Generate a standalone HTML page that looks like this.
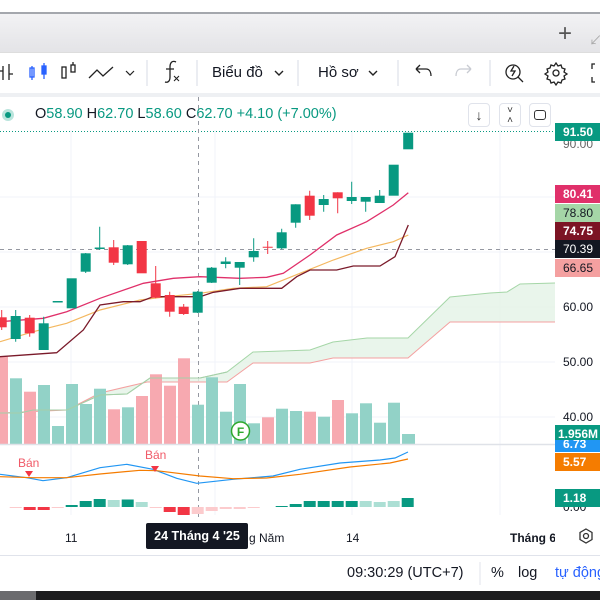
<!DOCTYPE html>
<html><head><meta charset="utf-8"><style>
*{margin:0;padding:0;box-sizing:border-box}
body{width:600px;height:600px;overflow:hidden;background:#fff;font-family:"Liberation Sans","Noto Sans CJK SC",sans-serif;position:relative;color:#131722}
.a{position:absolute;white-space:nowrap}
.pl{position:absolute;left:555px;width:45px;height:18px;font-size:12px;font-weight:bold;line-height:18px;padding-left:8px;color:#fff}
.ax{position:absolute;left:563px;font-size:12px;color:#131722}
.btn{position:absolute;top:103px;width:22px;height:24px;border:1px solid #e0e3eb;border-radius:4px;background:#fff;font-size:14px;text-align:center;line-height:22px;color:#333}
</style></head><body>
<!-- top chrome -->
<div class="a" style="left:0;top:0;width:600px;height:12px;background:#fff"></div>
<div class="a" style="left:0;top:12px;width:600px;height:2px;background:#a4a7ad"></div>
<div class="a" style="left:0;top:14px;width:600px;height:38px;background:linear-gradient(#f2f2f4,#e4e4e7)"></div>
<div class="a" style="left:558px;top:22px;font-size:24px;color:#555;line-height:24px">+</div>
<div class="a" style="left:589px;top:30px;font-size:13px;color:#aaa">↙</div>
<div class="a" style="left:0;top:52px;width:600px;height:42px;background:#fff;border-top:1px solid #ddd"></div>
<div class="a" style="left:0;top:93px;width:600px;height:4px;background:#eef0f3"></div>
<!-- toolbar icons -->
<svg class="a" style="left:0;top:52px" width="600" height="42" viewBox="0 0 600 42">
<g fill="none" stroke="#222" stroke-width="1.3">
<path d="M3 14v14M0 19h3M9 12v16M9 22h4"/>
<path d="M32 14v14M44 11v16" stroke="#2962ff"/><rect x="30" y="16" width="4" height="9" stroke="#2962ff"/><rect x="42" y="14" width="4" height="8" stroke="#2962ff" fill="#2962ff"/>
<rect x="62" y="15" width="4" height="11"/><rect x="71" y="13" width="4" height="7"/><path d="M73 10v3"/>
<path d="M89 26l8-8 6 6 10-9"/>
<path d="M126 19l4 4 4-4" stroke-width="1.2"/>
<path d="M147 8v26M197 8v26M298 8v26M398 8v26M490 8v26" stroke="#e0e3eb"/>
<path d="M176 10c-4-2-6 1-6 5v10c0 4-2 6-5 5M166 17h8"/>
<path d="M174 24l5 5M179 24l-5 5" stroke-width="1.1"/>
<path d="M275 19l4 4 4-4M369 19l4 4 4-4" stroke-width="1.4"/>
<path d="M416 17h10c4 0 5 4 5 7M416 17l4-4M416 17l4 4"/>
<path d="M471 17h-10c-4 0-5 4-5 7M471 17l-4-4M471 17l-4 4" stroke="#c8cbd2"/>
<circle cx="513" cy="20" r="7"/><path d="M518 25l5 5M514 14l-3 5h4l-3 5"/>
<circle cx="556" cy="21" r="3"/><path d="M556 11l2 3 3-1 1 3 3 1-1 3 3 2-3 2 1 3-3 1-1 3-3-1-2 3-2-3-3 1-1-3-3-1 1-3-3-2 3-2-1-3 3-1 1-3 3 1z"/>
<path d="M595 12h-3v5M592 25v5h3"/>
</g></svg>
<div class="a" style="left:212px;top:64px;font-size:15px">Biểu đồ</div>
<div class="a" style="left:318px;top:64px;font-size:15px">Hồ sơ</div>
<!-- legend -->
<div class="a" style="left:2px;top:109px;width:12px;height:12px;border-radius:50%;background:#b9e4dc"></div>
<div class="a" style="left:5px;top:112px;width:6px;height:6px;border-radius:50%;background:#089981"></div>
<div class="a" style="left:35px;top:106px;font-size:14.5px;color:#089981"><span style="color:#131722">O</span>58.90 <span style="color:#131722">H</span>62.70 <span style="color:#131722">L</span>58.60 <span style="color:#131722">C</span>62.70 +4.10 (+7.00%)</div>
<div class="btn" style="left:468px">↓</div>
<div class="btn" style="left:499px;font-size:10px;line-height:10px;padding-top:2px">˅<br>˄</div>
<div class="btn" style="left:529px"><div style="margin:6px auto;width:12px;height:10px;border:1.5px solid #333;border-radius:3px"></div></div>
<!-- chart -->
<svg class="a" style="left:0;top:0" width="600" height="600" viewBox="0 0 600 600">
<g stroke="#f0f3fa" stroke-width="1"><path d="M0 307H555M0 362H555M0 417H555M0 252H555M0 197H555M71 130V515M215 130V515M352 130V515M500 130V515"/></g>
<path d="M0 131.5H555" stroke="#089981" stroke-dasharray="1 2" stroke-width="1"/>
<path d="M0 249.5H555M198.5 97V520" stroke="#9598a1" stroke-dasharray="4 4" stroke-width="1"/>
<!-- cloud -->
<path d="M0 413 20 413 33 410 67 410 100 395 127 394 150 378 200 378 227 372 253 352 310 350 333 342 367 338 408 338 450 297 490 293 507 292 520 284 555 283 555 322 450 322 408 358 333 358 310 363 253 363 227 382 147 382 100 393 67 410 0 413Z" fill="#e4f2e6" opacity=".8"/>
<path d="M0 413 20 413 33 410 67 410 100 395 127 394 150 378 200 378 227 372 253 352 310 350 333 342 367 338 408 338 450 297 490 293 507 292 520 284 555 283" fill="none" stroke="#a5d6a7" stroke-width="1"/>
<path d="M0 413 67 410 100 393 147 382 227 382 253 363 310 363 333 358 408 358 450 322 555 322" fill="none" stroke="#f4a0a0" stroke-width="1"/>
<!-- volume -->
<g fill="#92d2c7">
<rect x="10" y="378.3" width="12" height="66.7"/><rect x="38" y="385" width="12" height="60"/><rect x="52" y="426" width="12" height="19"/><rect x="66" y="384" width="12" height="61"/><rect x="80" y="404" width="12" height="41"/><rect x="94" y="388.7" width="12" height="56.3"/><rect x="122" y="407.3" width="12" height="37.7"/><rect x="192" y="404.7" width="12" height="40.3"/><rect x="206" y="377.3" width="12" height="67.7"/><rect x="220" y="411.7" width="12" height="33.3"/><rect x="234" y="384" width="12" height="61"/><rect x="248" y="423.3" width="12" height="21.7"/><rect x="276" y="408.7" width="12" height="36.3"/><rect x="290" y="411" width="12" height="34"/><rect x="318" y="416.7" width="12" height="28.3"/><rect x="346" y="413.3" width="12" height="31.7"/><rect x="360" y="403.3" width="12" height="41.7"/><rect x="374" y="422.7" width="12" height="22.3"/><rect x="388" y="402.7" width="12" height="42.3"/><rect x="402" y="434" width="13" height="11"/>
</g>
<g fill="#f7a9b0">
<rect x="-4" y="356.7" width="12" height="88.3"/><rect x="24" y="391.7" width="12" height="53.3"/><rect x="108" y="409.3" width="12" height="35.7"/><rect x="136" y="396" width="12" height="49"/><rect x="150" y="374.3" width="12" height="70.7"/><rect x="164" y="385.7" width="12" height="59.3"/><rect x="178" y="358.3" width="12" height="86.7"/><rect x="262" y="417.3" width="12" height="27.7"/><rect x="304" y="411.7" width="12" height="33.3"/><rect x="332" y="400" width="12" height="45"/>
</g>
<path d="M0 413 20 413 33 410 67 410 100 395 127 394 150 378 200 378 227 372" fill="none" stroke="#a5cfa8" stroke-width="1"/>
<!-- MAs -->
<polyline points="0,321.7 43.3,318.3 66.7,311.7 100,298.3 143.3,283.3 173.3,278.3 200,276.7 240,278.3 266.7,277.3 283.3,273.3 310,255 336.7,235 366.7,221.7 393.3,205 408.3,192.7" fill="none" stroke="#e0306a" stroke-width="1.3"/>
<polyline points="0,341.7 33.3,331.7 66.7,323.3 100,310 140,300 166.7,296.7 200,293.3 233.3,288.3 266.7,286.7 300,273.3 333.3,260 366.7,248.3 393.3,241.7 408.3,235" fill="none" stroke="#f4b860" stroke-width="1.2"/>
<polyline points="0,356.7 56.7,352.7 83.3,330 100,305 123.3,301.7 140,301.7 153.3,296.7 200,296.7 213.3,292.3 240,288.3 281.7,288.3 296.7,276.7 310,270 336.7,270 353.3,266 380,266 395,256.7 408.3,225" fill="none" stroke="#7a1a2a" stroke-width="1.3"/>
<!-- candles -->
<g stroke="#089981" fill="#089981" stroke-width="1">
<path d="M15.7 310V341.7M43.7 316.7V350M57.7 301.7V302M85.7 253V273M99.7 226.7V250M127.7 245V265M197.7 291V313M211.7 267V283M225.7 257.3V268.3M239.7 262V285M253.7 238.3V261.7M281.7 228.7V249.3M295.7 204.3V227.7M323.7 195V211.7M351.7 181.7V204M365.7 197V211.7M379.7 190V203"/>
<rect x="10.7" y="316" width="10" height="23" stroke="none"/><rect x="38.7" y="323.3" width="10" height="26.7" stroke="none"/><rect x="52.7" y="301" width="10" height="1.5" stroke="none"/><rect x="66.7" y="278.3" width="10" height="30" stroke="none"/><rect x="80.7" y="253.3" width="10" height="18.4" stroke="none"/><rect x="94.7" y="247.5" width="10" height="1.5" stroke="none"/><rect x="122.7" y="245.3" width="10" height="19" stroke="none"/><rect x="192.7" y="291.7" width="10" height="21" stroke="none"/><rect x="206.7" y="267.7" width="10" height="15" stroke="none"/><rect x="220.7" y="261.5" width="10" height="2.5" stroke="none"/><rect x="234.7" y="262" width="10" height="5.7" stroke="none"/><rect x="248.7" y="251" width="10" height="6.3" stroke="none"/><rect x="276.7" y="232.3" width="10" height="16" stroke="none"/><rect x="290.7" y="204.3" width="10" height="18.4" stroke="none"/><rect x="318.7" y="199" width="10" height="6" stroke="none"/><rect x="346.7" y="197" width="10" height="4" stroke="none"/><rect x="360.7" y="197" width="10" height="4.7" stroke="none"/><rect x="374.7" y="195.7" width="10" height="7.3" stroke="none"/><rect x="388.7" y="164.7" width="10" height="31" stroke="none"/><rect x="403.2" y="132.7" width="10" height="16.6" stroke="none"/>
</g>
<g stroke="#f23645" fill="#f23645" stroke-width="1">
<path d="M1.7 310V330M29.7 315V336.7M113.7 240V265M155.7 266V298.3M169.7 291.7V316.7M183.7 304V315M267.7 241V254M262.7 247.3H272.7M309.7 190.7V220M337.7 192.3V213.3"/>
<rect x="-3.3" y="317.3" width="10" height="10" stroke="none"/><rect x="24.7" y="317.7" width="10" height="15.6" stroke="none"/><rect x="108.7" y="247.3" width="10" height="15.4" stroke="none"/><rect x="136.7" y="241" width="10" height="32.3" stroke="none"/><rect x="150.7" y="283.3" width="10" height="14.4" stroke="none"/><rect x="164.7" y="295" width="10" height="16.7" stroke="none"/><rect x="178.7" y="306.7" width="10" height="7.3" stroke="none"/><rect x="304.7" y="195.7" width="10" height="20" stroke="none"/><rect x="332.7" y="192.3" width="10" height="6" stroke="none"/>
</g>
<!-- F marker -->
<circle cx="240.5" cy="431" r="9" fill="#fff" stroke="#2ea82e" stroke-width="1.5"/>
<text x="240.5" y="436" font-family="Liberation Sans" font-size="12" font-weight="bold" fill="#2ea82e" text-anchor="middle">F</text>
<!-- pane separator -->
<path d="M0 444.5H600" stroke="#dfe2e8" stroke-width="1.5"/>
<!-- MACD -->
<polyline points="0,474.3 26.7,477.7 43,480.7 66.7,477.7 100,467.7 126.7,464.3 153,469.3 176.7,478.3 196.7,483.3 233,479.3 273,476 300,469.3 340,463 380,460 395,458 408,452" fill="none" stroke="#2196f3" stroke-width="1.2"/>
<polyline points="0,476.7 33,477.7 66.7,477.7 100,474 140,470.3 156.7,470.7 200,476 233,478.7 266.7,478 300,474.3 350,467 390,463 408,459" fill="none" stroke="#f57c00" stroke-width="1.2"/>
<path d="M25 471h8l-4 6z M151 466h8l-4 6z" fill="#f23645"/>
<text x="18" y="467" font-family="Liberation Sans" font-size="12" fill="#f05a68">Bán</text>
<text x="145" y="459" font-family="Liberation Sans" font-size="12" fill="#f05a68">Bán</text>
<g>
<rect x="9.7" y="507" width="12" height="1" fill="#fccbcd"/>
<rect x="23.7" y="507" width="12" height="3" fill="#f23645"/><rect x="37.7" y="507" width="12" height="3" fill="#f23645"/><rect x="51.7" y="507" width="12" height="1" fill="#fccbcd"/>
<rect x="65.7" y="505" width="12" height="2" fill="#089981"/><rect x="79.7" y="501" width="12" height="6" fill="#089981"/><rect x="93.7" y="499" width="12" height="8" fill="#089981"/><rect x="107.7" y="500" width="12" height="7" fill="#acdfd4"/><rect x="121.7" y="499.5" width="12" height="7.5" fill="#089981"/><rect x="135.7" y="502" width="12" height="5" fill="#acdfd4"/>
<rect x="149.7" y="507" width="12" height="1" fill="#fccbcd"/><rect x="163.7" y="507" width="12" height="5" fill="#f23645"/><rect x="177.7" y="507" width="12" height="8" fill="#f23645"/><rect x="191.7" y="507" width="12" height="7" fill="#fccbcd"/><rect x="205.7" y="507" width="12" height="4" fill="#fccbcd"/><rect x="219.7" y="507" width="12" height="2" fill="#fccbcd"/><rect x="233.7" y="507" width="12" height="2" fill="#fccbcd"/><rect x="247.7" y="507" width="12" height="1" fill="#fccbcd"/>
<rect x="275.7" y="506" width="12" height="1" fill="#089981"/><rect x="289.7" y="504" width="12" height="3" fill="#089981"/><rect x="303.7" y="501" width="12" height="6" fill="#089981"/><rect x="317.7" y="501" width="12" height="6" fill="#089981"/><rect x="331.7" y="501" width="12" height="6" fill="#089981"/><rect x="345.7" y="501" width="12" height="6" fill="#089981"/><rect x="359.7" y="501" width="12" height="6" fill="#acdfd4"/><rect x="373.7" y="502" width="12" height="5" fill="#acdfd4"/><rect x="387.7" y="501" width="12" height="6" fill="#acdfd4"/><rect x="401.7" y="498" width="12" height="9" fill="#089981"/>
</g>
<!-- axis gear -->
<path d="M586 529l6 3.5v7l-6 3.5-6-3.5v-7z" fill="none" stroke="#333" stroke-width="1.3"/><circle cx="586" cy="536" r="2.5" fill="none" stroke="#333" stroke-width="1.3"/>
<path d="M0 555.5H600" stroke="#e0e3eb"/>
<path d="M480 562V585" stroke="#e0e3eb"/>
</svg>
<!-- price axis -->
<div class="ax" style="top:137px;color:#666">90.00</div>
<div class="pl" style="top:123px;background:#089981">91.50</div>
<div class="pl" style="top:185px;background:#e0306a">80.41</div>
<div class="pl" style="top:204px;background:#a5d6a7;color:#131722;font-weight:normal">78.80</div>
<div class="pl" style="top:222px;background:#7c1424">74.75</div>
<div class="pl" style="top:240px;background:#131722;font-weight:normal">70.39</div>
<div class="pl" style="top:259px;background:#f4a0a0;color:#131722;font-weight:normal">66.65</div>
<div class="ax" style="top:300px">60.00</div>
<div class="ax" style="top:355px">50.00</div>
<div class="ax" style="top:410px">40.00</div>
<div class="pl" style="top:425px;background:#089981;padding-left:3px">1.956M</div>
<div class="pl" style="top:440px;height:12px;line-height:8px;background:#2196f3;overflow:hidden">6.73</div>
<div class="pl" style="top:453px;background:#f57c00">5.57</div>
<div class="ax" style="top:500px">0.00</div>
<div class="pl" style="top:489px;background:#089981">1.18</div>
<!-- time axis -->
<div class="a" style="left:65px;top:531px;font-size:12px">11</div>
<div class="a" style="left:249px;top:531px;font-size:12px">g Năm</div>
<div class="a" style="left:346px;top:531px;font-size:12px">14</div>
<div class="a" style="left:510px;top:531px;font-size:12px;font-weight:bold;width:45px;overflow:hidden">Tháng 6</div>
<div class="a" style="left:146px;top:523px;width:102px;height:26px;background:#131722;border-radius:2px;color:#fff;font-size:12.5px;font-weight:bold;line-height:26px;text-align:center">24 Tháng 4 '25</div>
<!-- bottom bar -->
<div class="a" style="left:347px;top:565px;font-size:14.5px">09:30:29 (UTC+7)</div>
<div class="a" style="left:491px;top:565px;font-size:14.5px">%</div>
<div class="a" style="left:518px;top:565px;font-size:14.5px">log</div>
<div class="a" style="left:555px;top:565px;font-size:14.5px;color:#2962ff">tự động</div>
<div class="a" style="left:0;top:591px;width:600px;height:9px;background:#1c1c1e"></div>
<div class="a" style="left:0;top:591px;width:36px;height:9px;background:#6b6b6e"></div>
</body></html>
